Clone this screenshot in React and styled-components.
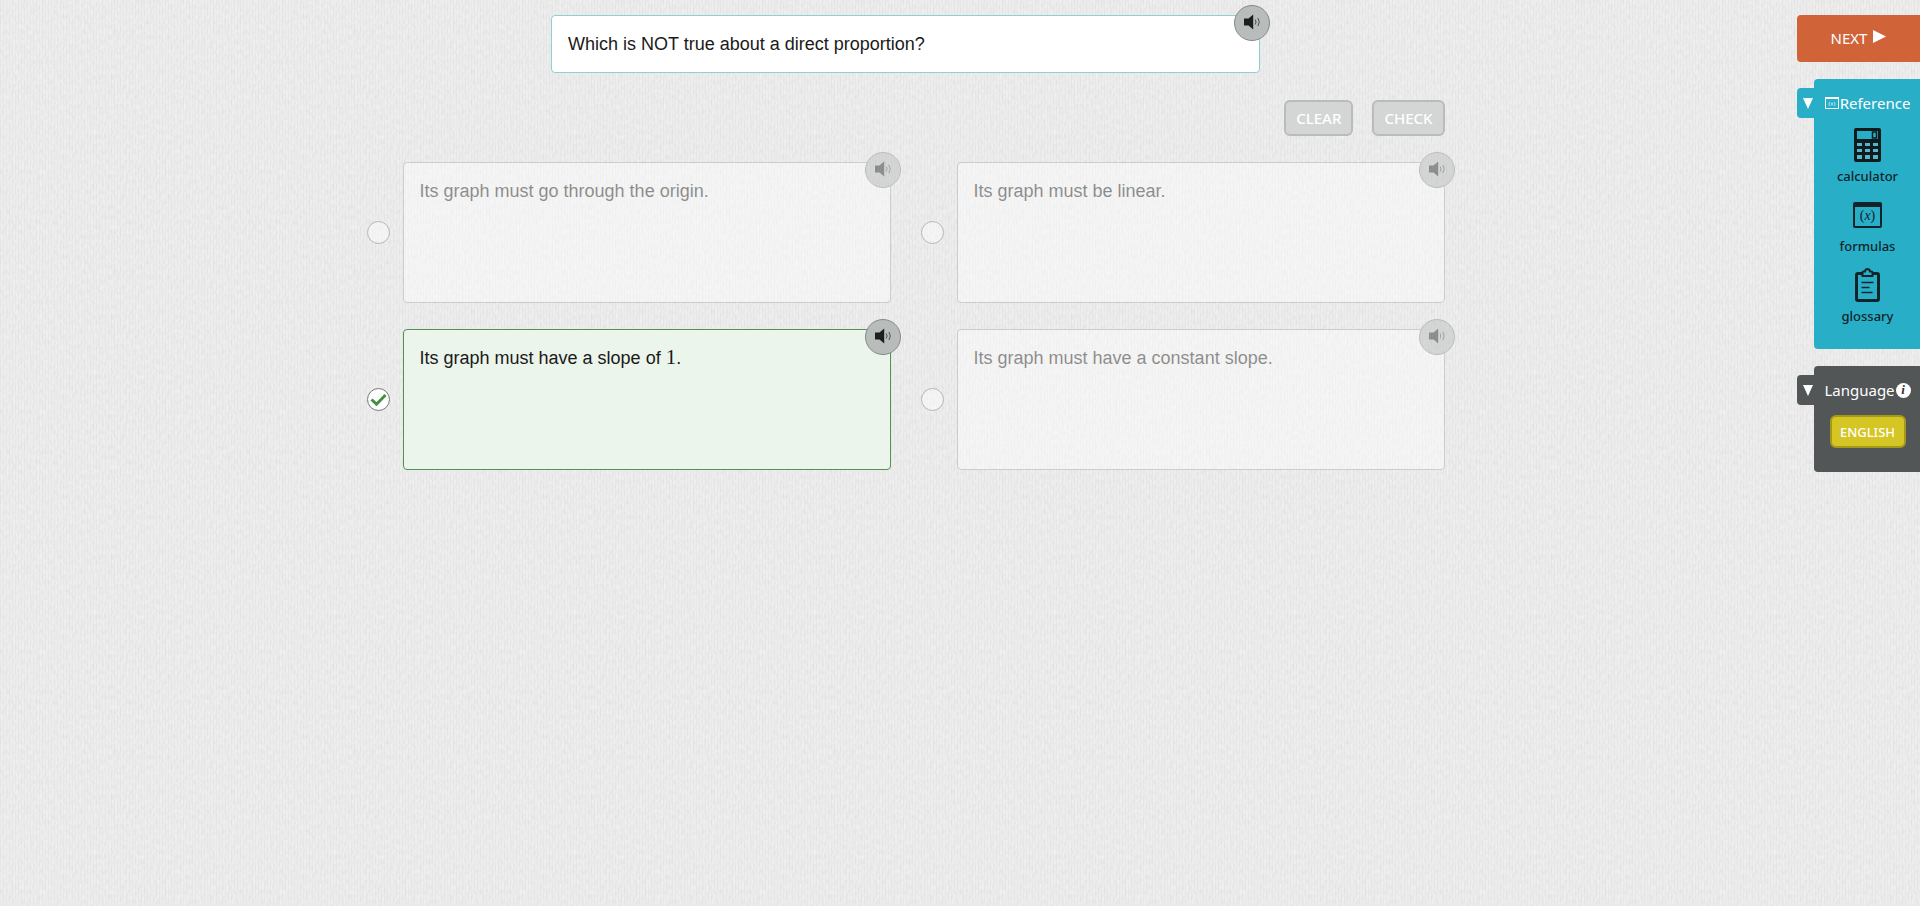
import { useState } from "react";
import styled, { createGlobalStyle } from "styled-components";

const weave = `<svg xmlns="http://www.w3.org/2000/svg" width="240" height="240"><filter id="n" x="0" y="0" width="100%" height="100%"><feTurbulence type="fractalNoise" baseFrequency="0.45 0.2" numOctaves="2" stitchTiles="stitch"/><feColorMatrix values="0 0 0 0 0.5  0 0 0 0 0.5  0 0 0 0 0.5  0.35 0 0 0 -0.09"/></filter><rect width="240" height="240" filter="url(#n)"/></svg>`;

const GlobalStyle = createGlobalStyle`
  * {
    box-sizing: border-box;
  }

  body {
    margin: 0;
    min-height: 100vh;
    color: #1a1a1a;
    font-family: "Liberation Sans", Arial, sans-serif;
    background-color: #f0f0f0;
    background-image:
      repeating-linear-gradient(90deg, rgba(0, 0, 0, 0.02) 0 1px, transparent 1px 3px),
      url("data:image/svg+xml,${encodeURIComponent(weave)}");
  }

  button {
    font-family: "Noto Sans", sans-serif;
    cursor: pointer;
  }
`;

const Page = styled.div`
  display: flex;
  align-items: flex-start;
  padding-top: 15px;
`;

const Main = styled.main`
  flex: 1;
  display: flex;
  flex-direction: column;
  align-items: center;
  padding-left: 14px;
`;

const Question = styled.header`
  position: relative;
  width: 100%;
  max-width: 709px;
  padding: 15px 16px;
  border: 1px solid #8fcfd6;
  border-radius: 4px;
  background-color: white;
`;

const QuestionText = styled.h1`
  margin: 0;
  font-size: 18px;
  font-weight: 400;
  line-height: 26px;
`;

const Content = styled.form`
  width: 100%;
  max-width: 1078px;
`;

const Actions = styled.div`
  display: flex;
  justify-content: flex-end;
  gap: 19px;
  padding: 27px 0 26px;
`;

const ActionButton = styled.button`
  height: 36px;
  padding: 0 10px;
  border: 2px solid #b9bcbb;
  border-radius: 6px;
  background-color: #d3d6d5;
  color: white;
  font-size: 15px;
  font-weight: 500;
  line-height: 30px;
`;

const Options = styled.div`
  display: grid;
  grid-template-columns: 1fr 1fr;
  gap: 26px 30px;
`;

const Option = styled.div`
  display: flex;
  align-items: center;
  gap: 13px;
  opacity: ${(props) => (props.$faded ? 0.45 : 1)};
`;

const RadioBox = styled.span`
  display: grid;
  place-items: center;

  > * {
    grid-area: 1 / 1;
  }

  svg {
    pointer-events: none;
  }
`;

const Radio = styled.input`
  appearance: none;
  width: 23px;
  height: 23px;
  margin: 0;
  border: 1px solid #777;
  border-radius: 50%;
  background-color: white;
`;

const Card = styled.div`
  position: relative;
  flex: 1;
  display: flex;
  min-height: 141px;
  border: 1px solid ${(props) => (props.$correct ? "#4f9450" : "#aaa")};
  border-radius: 4px;
  background-color: ${(props) => (props.$correct ? "#ebf5eb" : "white")};
`;

const CardText = styled.label`
  flex: 1;
  padding: 15px 16px;
  font-size: 18px;
  line-height: 26px;
`;

const MathNumber = styled.span`
  font-family: "Liberation Serif", serif;
  font-size: 21px;
  line-height: 20px;
`;

const Speaker = styled.button`
  position: absolute;
  top: -11px;
  right: -11px;
  display: flex;
  align-items: center;
  justify-content: center;
  width: 36px;
  height: 36px;
  padding: 0 0 2px;
  border: 1px solid #858989;
  border-radius: 50%;
  background-color: #b8bdbc;
`;

const Sidebar = styled.aside`
  width: 123px;
  display: flex;
  flex-direction: column;
  gap: 17px;
  color: white;
  font-family: "Noto Sans", sans-serif;
`;

const NextButton = styled.button`
  display: flex;
  align-items: center;
  justify-content: center;
  gap: 6px;
  height: 47px;
  padding: 0 0 2px;
  border: none;
  border-radius: 4px 0 0 4px;
  background-color: #d16339;
  color: white;
  font-size: 15px;
`;

const PanelBox = styled.section`
  display: flex;
  align-items: flex-start;
`;

const PanelTab = styled.button`
  display: flex;
  align-items: center;
  justify-content: flex-end;
  width: 17px;
  height: 30px;
  margin-top: 9px;
  padding: 0 1px 0 0;
  border: none;
  border-radius: 4px 0 0 4px;
  background-color: ${(props) => props.$color};
`;

const PanelBody = styled.div`
  flex: 1;
  display: flex;
  flex-direction: column;
  align-items: center;
  padding: 12px 0 ${(props) => props.$bottom}px 1px;
  border-radius: 4px 0 0 4px;
  background-color: ${(props) => props.$color};
`;

const PanelTitle = styled.h2`
  display: flex;
  align-items: center;
  gap: 1px;
  margin: 0;
  font-size: 15px;
  font-weight: 400;
  line-height: 24px;
`;

const Tool = styled.button`
  display: flex;
  flex-direction: column;
  align-items: center;
  justify-content: space-between;
  height: 61px;
  margin-top: 9px;
  padding: 0;
  border: none;
  background: none;
  color: #10242a;
  font-size: 13px;
  font-weight: 500;
  line-height: 18px;
`;

const ToolIcon = styled.span`
  display: flex;
  align-items: center;
  height: 42px;
`;

const LanguageButton = styled.button`
  width: 76px;
  height: 33px;
  margin-top: 13px;
  padding: 0;
  border: 2px solid #a59a17;
  border-radius: 6px;
  background-color: #d5c525;
  color: white;
  font-size: 13px;
  font-weight: 500;
`;

const SpeakerIcon = () => (
  <svg width="18" height="16" viewBox="0 0 18 16">
    <path d="M1 4.500h4.500L10.200.5v15L5.500 11.500H1z" fill="#1d1f1f" />
    <path
      d="M12.200 5.500q1.800 2.500 0 5M14.900 4q2.800 4 0 8"
      fill="none"
      stroke="#4a4d4d"
      strokeWidth="1"
    />
  </svg>
);

const CheckIcon = () => (
  <svg width="17" height="15" viewBox="0 0 17 15">
    <path d="M1.500 7.500l5 4.700L15.500 3" fill="none" stroke="#449145" strokeWidth="3" />
  </svg>
);

const ArrowRight = () => (
  <svg width="13" height="16" viewBox="0 0 13 16">
    <path d="M0 0l13 6.500L0 13z" fill="white" />
  </svg>
);

const ArrowDown = () => (
  <svg width="10" height="11" viewBox="0 0 10 11">
    <path d="M0 0h10L5 11z" fill="white" />
  </svg>
);

const ReferenceIcon = () => (
  <svg width="14" height="12" viewBox="0 0 14 12" fill="none" stroke="white">
    <path d="M.5.500h13v11H.5z" />
    <path d="M0 1h14" strokeWidth="2" />
    <path d="M4.500 5q-1 2 0 4M9.500 5q1 2 0 4M6 5.500l2 3M8 5.500l-2 3" strokeWidth=".6" />
  </svg>
);

const CalculatorIcon = () => (
  <svg width="27" height="34" viewBox="0 0 27 34">
    <rect width="27" height="34" rx="2" fill="#0f1c1e" />
    <path d="M3 3h21v8H3z" fill="#29aec7" />
    <path d="M18.500 4h4v6h-4z" fill="none" stroke="#0f1c1e" strokeWidth="1.500" />
    <path
      d="M3 15h5v3H3zM11 15h5v3h-5zM19 15h5v3h-5zM3 21h5v3H3zM11 21h5v3h-5zM19 21h5v3h-5zM3 27h5v4H3zM11 27h5v4h-5zM19 27h5v4h-5z"
      fill="#58b4cd"
    />
  </svg>
);

const FormulaBox = styled.span`
  width: 29px;
  height: 26px;
  border: 2px solid #10242a;
  border-top-width: 5px;
  border-radius: 2px;
  font-family: "Liberation Serif", serif;
  font-size: 14px;
  font-weight: 400;
  line-height: 17px;
  text-align: center;
`;

const ClipboardIcon = () => (
  <svg width="25" height="34" viewBox="0 0 25 34" fill="none" stroke="#10242a">
    <rect x="1.500" y="5.500" width="22" height="27" rx="1.500" strokeWidth="3" />
    <path
      d="M7.500 8V4.500q0-1 1-1H10q.5-2.500 2.500-2.500T15 3.500h1.500q1 0 1 1V8z"
      fill="#29aec7"
      strokeWidth="2"
    />
    <path d="M6.500 14.500h12M6.500 19.500h8M6.500 24.500h11" strokeWidth="1.500" />
  </svg>
);

const InfoBadge = styled.span`
  width: 15px;
  height: 15px;
  border-radius: 50%;
  background-color: white;
  color: #333;
  font-family: "Liberation Serif", serif;
  font-size: 13px;
  font-style: italic;
  font-weight: 700;
  line-height: 14px;
  text-align: center;
`;

const options = [
  { id: "origin", text: "Its graph must go through the origin." },
  { id: "linear", text: "Its graph must be linear." },
  {
    id: "slope",
    text: (
      <>
        Its graph must have a slope of <MathNumber>1</MathNumber>.
      </>
    ),
    correct: true,
  },
  { id: "constant", text: "Its graph must have a constant slope." },
];

const tools = [
  { name: "calculator", icon: <CalculatorIcon /> },
  {
    name: "formulas",
    icon: (
      <FormulaBox>
        (<i>x</i>)
      </FormulaBox>
    ),
  },
  { name: "glossary", icon: <ClipboardIcon /> },
];

const Panel = ({ name, color, bottom, title, children }) => {
  const [open, setOpen] = useState(true);

  return (
    <PanelBox>
      <PanelTab
        $color={color}
        aria-label={`Toggle ${name}`}
        aria-expanded={open}
        onClick={() => setOpen(!open)}
      >
        <ArrowDown />
      </PanelTab>
      <PanelBody $color={color} $bottom={bottom}>
        <PanelTitle>{title}</PanelTitle>
        {open && children}
      </PanelBody>
    </PanelBox>
  );
};

function App() {
  return (
    <>
      <GlobalStyle />
      <Page>
        <Main>
          <Question>
            <QuestionText>Which is NOT true about a direct proportion?</QuestionText>
            <Speaker aria-label="Read question">
              <SpeakerIcon />
            </Speaker>
          </Question>

          <Content>
            <Actions>
              <ActionButton type="button" disabled>
                CLEAR
              </ActionButton>
              <ActionButton type="button" disabled>
                CHECK
              </ActionButton>
            </Actions>

            <Options>
              {options.map(({ id, text, correct }) => (
                <Option key={id} $faded={!correct}>
                  <RadioBox>
                    <Radio
                      type="radio"
                      name="answer"
                      id={id}
                      defaultChecked={correct}
                      disabled={!correct}
                    />
                    {correct && <CheckIcon />}
                  </RadioBox>
                  <Card $correct={correct}>
                    <CardText htmlFor={id}>{text}</CardText>
                    <Speaker type="button" aria-label="Read answer">
                      <SpeakerIcon />
                    </Speaker>
                  </Card>
                </Option>
              ))}
            </Options>
          </Content>
        </Main>

        <Sidebar>
          <NextButton>
            NEXT <ArrowRight />
          </NextButton>

          <Panel
            name="reference"
            color="#29aec7"
            bottom={24}
            title={
              <>
                <ReferenceIcon />
                Reference
              </>
            }
          >
            {tools.map((tool) => (
              <Tool key={tool.name}>
                <ToolIcon>{tool.icon}</ToolIcon>
                {tool.name}
              </Tool>
            ))}
          </Panel>

          <Panel
            name="language"
            color="#525656"
            bottom={24}
            title={
              <>
                Language
                <InfoBadge>i</InfoBadge>
              </>
            }
          >
            <LanguageButton>ENGLISH</LanguageButton>
          </Panel>
        </Sidebar>
      </Page>
    </>
  );
}

export default App;
